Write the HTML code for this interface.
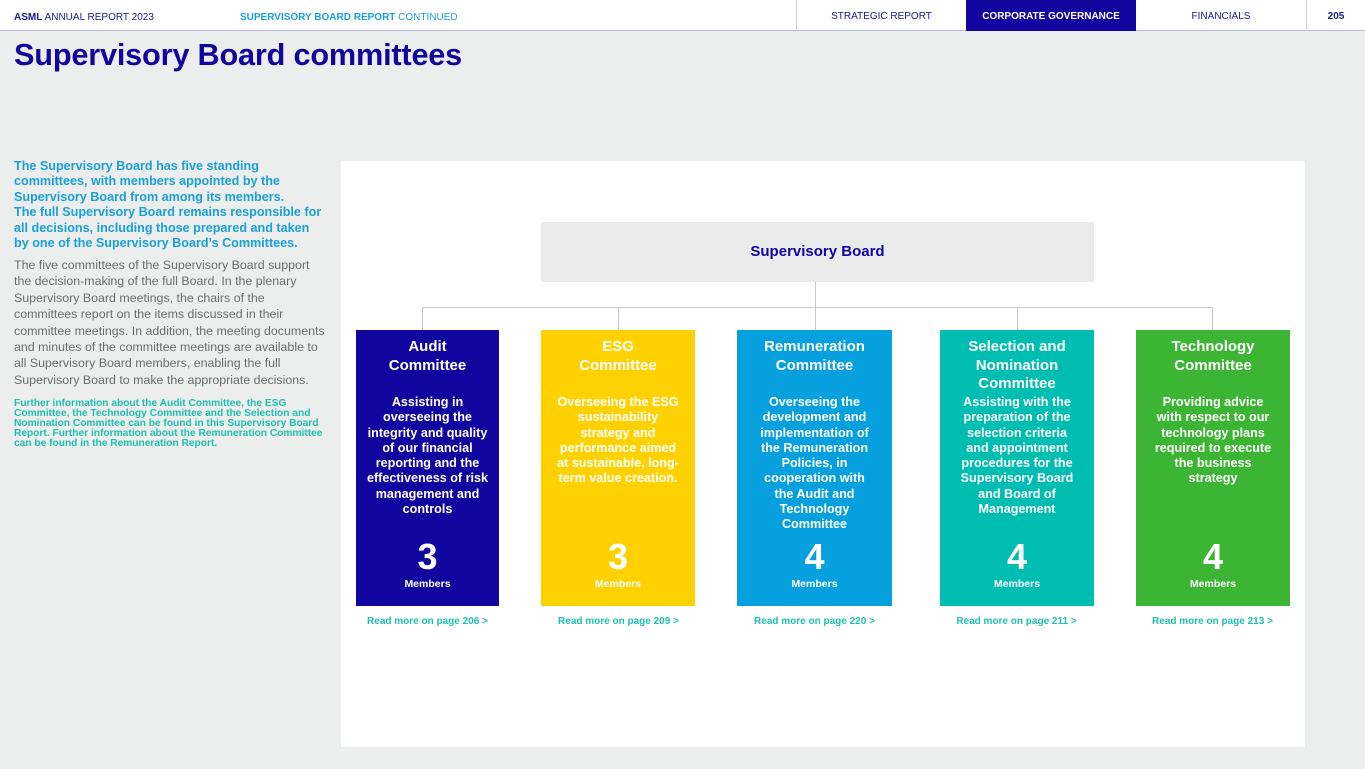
<!DOCTYPE html>
<html><head><meta charset="utf-8"><style>
*{margin:0;padding:0;box-sizing:border-box}
body{width:1365px;height:769px;background:#eceeee;font-family:"Liberation Sans",Arial,sans-serif;position:relative;overflow:hidden}
.top{position:absolute;left:0;top:0;width:1365px;height:31px;background:#fff;border-bottom:1px solid #b9b9d4;font-size:10px;color:#1a1a8c}
.top span{position:absolute;top:12px}
.tab{position:absolute;top:0;height:31px;line-height:34px;text-align:center;font-size:10px}
h1{position:absolute;left:14px;top:37px;font-size:30.7px;color:#10069f;font-weight:bold;letter-spacing:-0.2px}
.lead{position:absolute;left:14px;top:159px;font-size:12.6px;line-height:15.4px;font-weight:bold;color:#1ba0d8;white-space:nowrap}
.body{position:absolute;left:14px;top:257px;font-size:12.4px;line-height:16.4px;color:#6c6c6c;white-space:nowrap}
.note{position:absolute;left:14px;top:399px;font-size:10.2px;line-height:10px;font-weight:bold;color:#1fbfb0;white-space:nowrap}
.panel{position:absolute;left:341px;top:161px;width:964px;height:586px;background:#fff}
.sb{position:absolute;left:541px;top:222px;width:553px;height:60px;background:#ebebeb;color:#10069f;font-weight:bold;font-size:15px;text-align:center;line-height:60px}
.ln{position:absolute;background:#c8c8c8}
.card{position:absolute;top:330px;height:276px;color:#fff;text-align:center;font-weight:bold}
.card .t{position:absolute;top:8px;left:0;right:0;font-size:15px;line-height:18.5px}
.card .d{position:absolute;top:65px;left:0;right:0;font-size:12.6px;line-height:15.3px;white-space:nowrap}
.card .n{position:absolute;top:209px;left:0;right:0;font-size:36px;line-height:36px}
.card .m{position:absolute;top:248px;left:0;right:0;font-size:10.5px}
.rm{position:absolute;top:616px;font-size:10px;font-weight:bold;color:#1fbfb0;text-align:center}
</style></head><body>
<div class="top">
<span style="left:14px"><b>ASML</b> ANNUAL REPORT 2023</span>
<span style="left:240px;color:#1ba0d8"><b>SUPERVISORY BOARD REPORT</b> CONTINUED</span>
<div class="tab" style="left:796px;width:170px;border-left:1px solid #d0d0e4">STRATEGIC REPORT</div>
<div class="tab" style="left:966px;width:170px;background:#10069f;color:#fff;font-weight:bold">CORPORATE GOVERNANCE</div>
<div class="tab" style="left:1136px;width:170px">FINANCIALS</div>
<div class="tab" style="left:1306px;width:59px;border-left:1px solid #d0d0e4;font-weight:bold">205</div>
</div>
<h1>Supervisory Board committees</h1>
<div class="lead">The Supervisory Board has five standing<br>committees, with members appointed by the<br>Supervisory Board from among its members.<br>The full Supervisory Board remains responsible for<br>all decisions, including those prepared and taken<br>by one of the Supervisory Board’s Committees.</div>
<div class="body">The five committees of the Supervisory Board support<br>the decision-making of the full Board. In the plenary<br>Supervisory Board meetings, the chairs of the<br>committees report on the items discussed in their<br>committee meetings. In addition, the meeting documents<br>and minutes of the committee meetings are available to<br>all Supervisory Board members, enabling the full<br>Supervisory Board to make the appropriate decisions.</div>
<div class="note">Further information about the Audit Committee, the ESG<br>Committee, the Technology Committee and the Selection and<br>Nomination Committee can be found in this Supervisory Board<br>Report. Further information about the Remuneration Committee<br>can be found in the Remuneration Report.</div>
<div class="panel"></div>
<div class="sb">Supervisory Board</div>
<div class="ln" style="left:815px;top:282px;width:1px;height:26px"></div>
<div class="ln" style="left:422px;top:307px;width:791px;height:1px"></div>
<div class="ln" style="left:422px;top:307px;width:1px;height:23px"></div>
<div class="ln" style="left:618px;top:307px;width:1px;height:23px"></div>
<div class="ln" style="left:815px;top:307px;width:1px;height:23px"></div>
<div class="ln" style="left:1017px;top:307px;width:1px;height:23px"></div>
<div class="ln" style="left:1212px;top:307px;width:1px;height:23px"></div>

<div class="card" style="left:356px;width:143px;background:#10069f"><div class="t">Audit<br>Committee</div><div class="d">Assisting in<br>overseeing the<br>integrity and quality<br>of our financial<br>reporting and the<br>effectiveness of risk<br>management and<br>controls</div><div class="n">3</div><div class="m">Members</div></div>
<div class="card" style="left:541px;width:154px;background:#ffd100"><div class="t">ESG<br>Committee</div><div class="d">Overseeing the ESG<br>sustainability<br>strategy and<br>performance aimed<br>at sustainable, long-<br>term value creation.</div><div class="n">3</div><div class="m">Members</div></div>
<div class="card" style="left:737px;width:155px;background:#07a0df"><div class="t">Remuneration<br>Committee</div><div class="d">Overseeing the<br>development and<br>implementation of<br>the Remuneration<br>Policies, in<br>cooperation with<br>the Audit and<br>Technology<br>Committee</div><div class="n">4</div><div class="m">Members</div></div>
<div class="card" style="left:940px;width:154px;background:#00bdb1"><div class="t">Selection and<br>Nomination<br>Committee</div><div class="d">Assisting with the<br>preparation of the<br>selection criteria<br>and appointment<br>procedures for the<br>Supervisory Board<br>and Board of<br>Management</div><div class="n">4</div><div class="m">Members</div></div>
<div class="card" style="left:1136px;width:154px;background:#3cb534"><div class="t">Technology<br>Committee</div><div class="d">Providing advice<br>with respect to our<br>technology plans<br>required to execute<br>the business<br>strategy</div><div class="n">4</div><div class="m">Members</div></div>

<div class="rm" style="left:346px;width:163px">Read more on page 206 &gt;</div>
<div class="rm" style="left:537px;width:163px">Read more on page 209 &gt;</div>
<div class="rm" style="left:733px;width:163px">Read more on page 220 &gt;</div>
<div class="rm" style="left:935px;width:163px">Read more on page 211 &gt;</div>
<div class="rm" style="left:1131px;width:163px">Read more on page 213 &gt;</div>
</body></html>
